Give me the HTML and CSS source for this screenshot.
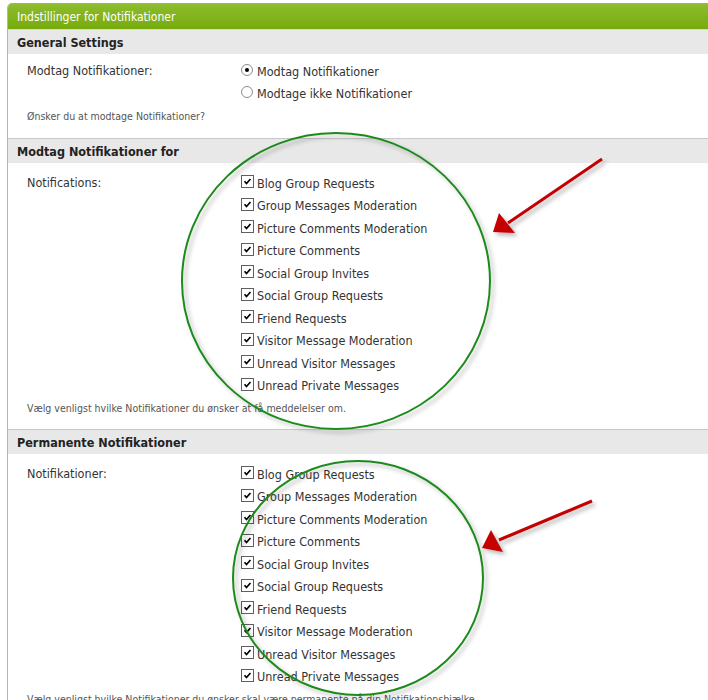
FILE: index.html
```html
<!doctype html>
<html lang="da">
  <head>
    <meta charset="UTF-8" />
    <meta name="viewport" content="width=device-width, initial-scale=1.0">
    <title>Indstillinger for Notifikationer</title>
    <link rel="stylesheet" href="styles.css">
  </head>
  <body>
    <div class="panel">
      <div class="panel-title">Indstillinger for Notifikationer</div>

      <div class="section">
        <div class="section-head">General Settings</div>
        <div class="section-body first">
          <div class="setting">
            <div class="setting-label">Modtag Notifikationer:</div>
            <div class="options">
              <label class="option"><span class="radio checked"></span>Modtag Notifikationer</label>
              <label class="option"><span class="radio"></span>Modtage ikke Notifikationer</label>
            </div>
          </div>
          <p class="desc">Ønsker du at modtage Notifikationer?</p>
        </div>
      </div>

      <div class="section">
        <div class="section-head">Modtag Notifikationer for</div>
        <div class="section-body">
          <div class="setting">
            <div class="setting-label">Notifications:</div>
            <div class="options">
              <label class="option"><span class="check"><svg viewBox="0 0 13 13"><path d="M3 6.2 L5.3 8.8 L10 3.6" /></svg></span>Blog Group Requests</label>
              <label class="option"><span class="check"><svg viewBox="0 0 13 13"><path d="M3 6.2 L5.3 8.8 L10 3.6" /></svg></span>Group Messages Moderation</label>
              <label class="option"><span class="check"><svg viewBox="0 0 13 13"><path d="M3 6.2 L5.3 8.8 L10 3.6" /></svg></span>Picture Comments Moderation</label>
              <label class="option"><span class="check"><svg viewBox="0 0 13 13"><path d="M3 6.2 L5.3 8.8 L10 3.6" /></svg></span>Picture Comments</label>
              <label class="option"><span class="check"><svg viewBox="0 0 13 13"><path d="M3 6.2 L5.3 8.8 L10 3.6" /></svg></span>Social Group Invites</label>
              <label class="option"><span class="check"><svg viewBox="0 0 13 13"><path d="M3 6.2 L5.3 8.8 L10 3.6" /></svg></span>Social Group Requests</label>
              <label class="option"><span class="check"><svg viewBox="0 0 13 13"><path d="M3 6.2 L5.3 8.8 L10 3.6" /></svg></span>Friend Requests</label>
              <label class="option"><span class="check"><svg viewBox="0 0 13 13"><path d="M3 6.2 L5.3 8.8 L10 3.6" /></svg></span>Visitor Message Moderation</label>
              <label class="option"><span class="check"><svg viewBox="0 0 13 13"><path d="M3 6.2 L5.3 8.8 L10 3.6" /></svg></span>Unread Visitor Messages</label>
              <label class="option"><span class="check"><svg viewBox="0 0 13 13"><path d="M3 6.2 L5.3 8.8 L10 3.6" /></svg></span>Unread Private Messages</label>
            </div>
          </div>
          <p class="desc">Vælg venligst hvilke Notifikationer du ønsker at få meddelelser om.</p>
        </div>
      </div>

      <div class="section">
        <div class="section-head">Permanente Notifikationer</div>
        <div class="section-body">
          <div class="setting">
            <div class="setting-label">Notifikationer:</div>
            <div class="options">
              <label class="option"><span class="check"><svg viewBox="0 0 13 13"><path d="M3 6.2 L5.3 8.8 L10 3.6" /></svg></span>Blog Group Requests</label>
              <label class="option"><span class="check"><svg viewBox="0 0 13 13"><path d="M3 6.2 L5.3 8.8 L10 3.6" /></svg></span>Group Messages Moderation</label>
              <label class="option"><span class="check"><svg viewBox="0 0 13 13"><path d="M3 6.2 L5.3 8.8 L10 3.6" /></svg></span>Picture Comments Moderation</label>
              <label class="option"><span class="check"><svg viewBox="0 0 13 13"><path d="M3 6.2 L5.3 8.8 L10 3.6" /></svg></span>Picture Comments</label>
              <label class="option"><span class="check"><svg viewBox="0 0 13 13"><path d="M3 6.2 L5.3 8.8 L10 3.6" /></svg></span>Social Group Invites</label>
              <label class="option"><span class="check"><svg viewBox="0 0 13 13"><path d="M3 6.2 L5.3 8.8 L10 3.6" /></svg></span>Social Group Requests</label>
              <label class="option"><span class="check"><svg viewBox="0 0 13 13"><path d="M3 6.2 L5.3 8.8 L10 3.6" /></svg></span>Friend Requests</label>
              <label class="option"><span class="check"><svg viewBox="0 0 13 13"><path d="M3 6.2 L5.3 8.8 L10 3.6" /></svg></span>Visitor Message Moderation</label>
              <label class="option"><span class="check"><svg viewBox="0 0 13 13"><path d="M3 6.2 L5.3 8.8 L10 3.6" /></svg></span>Unread Visitor Messages</label>
              <label class="option"><span class="check"><svg viewBox="0 0 13 13"><path d="M3 6.2 L5.3 8.8 L10 3.6" /></svg></span>Unread Private Messages</label>
            </div>
          </div>
          <p class="desc">Vælg venligst hvilke Notifikationer du ønsker skal være permanente på din Notifikationsbjælke.</p>
        </div>
      </div>
    </div>

    <!-- annotations drawn over the screenshot -->
    <svg class="marks" width="708" height="700" viewBox="0 0 708 700">
      <defs>
        <filter id="shade" x="-20%" y="-20%" width="140%" height="140%">
          <feDropShadow dx="3" dy="3" stdDeviation="2" flood-color="#000" flood-opacity="0.28" />
        </filter>
      </defs>
      <g filter="url(#shade)">
        <ellipse cx="336" cy="281" rx="154" ry="148" fill="none" stroke="#1f8a1f" stroke-width="2" />
        <ellipse cx="358" cy="578" rx="125" ry="117" fill="none" stroke="#1f8a1f" stroke-width="2" />
        <line x1="602" y1="159" x2="508" y2="223" stroke="#c40000" stroke-width="3" />
        <polygon points="493,232 499,213 515,233" fill="#c40000" />
        <line x1="592" y1="501" x2="499" y2="540" stroke="#c40000" stroke-width="3" />
        <polygon points="482,548 491,530 503,552" fill="#c40000" />
      </g>
    </svg>
  </body>
</html>
```

FILE: styles.css
```css
html,
body {
  overflow: hidden;
}
body {
  margin: 0;
  background-color: #fff;
  font-family: "DejaVu Sans Condensed", "DejaVu Sans", sans-serif;
  color: #333;
}
.panel {
  margin: 3px 0 0 7px;
  border-left: 1px solid #a9b7c4;
  border-top-left-radius: 5px;
  overflow: hidden;
}
.panel-title {
  height: 26px;
  line-height: 28px;
  padding-left: 9px;
  font-size: 12px;
  color: #fff;
  background: linear-gradient(#9cc63e 0, #8cbb2c 2px, #7bae12 22px, #74a90a);
  border-bottom: 1px solid #cfe7a0;
}
.section + .section {
  border-top: 1px solid #c8c8c8;
}
.section-head {
  height: 24px;
  line-height: 25px;
  padding-left: 9px;
  background-color: #e8e8e8;
  font-size: 12.5px;
  font-weight: bold;
  color: #222;
}
.section-body {
  padding: 9px 0 14px 19px;
}
.section-body.first {
  padding-top: 6px;
  padding-bottom: 15px;
}
.setting {
  display: grid;
  grid-template-columns: 214px 1fr;
  font-size: 12.5px;
}
.setting-label {
  line-height: 22.5px;
}
.option {
  display: flex;
  align-items: center;
  gap: 3px;
  height: 22.5px;
}
.check {
  width: 11px;
  height: 11px;
  border: 1px solid #5f5f5f;
  background-color: #fff;
  margin-top: -3px;
}
.check svg {
  display: block;
  width: 11px;
  height: 11px;
}
.check path {
  fill: none;
  stroke: #000;
  stroke-width: 2;
}
.radio {
  box-sizing: border-box;
  width: 12px;
  height: 12px;
  margin-right: 1px;
  margin-top: -3px;
  border: 1px solid #8d8d8d;
  border-radius: 50%;
  background-color: #fff;
  display: flex;
  align-items: center;
  justify-content: center;
}
.radio.checked::after {
  content: "";
  width: 4px;
  height: 4px;
  border-radius: 50%;
  background-color: #000;
}
.desc {
  margin: 4px 0 0;
  line-height: 14px;
  font-size: 10.5px;
  color: #555;
}
.marks {
  position: absolute;
  top: 0;
  left: 0;
  pointer-events: none;
}
```
